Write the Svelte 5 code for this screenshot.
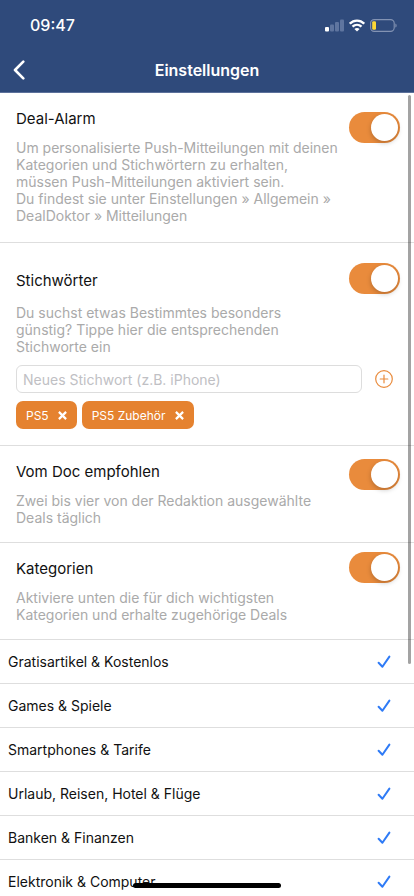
<script>
  let alarm = $state(true);
  let keywordsOn = $state(true);
  let recommended = $state(true);
  let categoriesOn = $state(true);
  let draft = $state('');
  let keywords = $state(['PS5', 'PS5 Zubehör']);
  let categories = $state(
    [
      'Gratisartikel & Kostenlos',
      'Games & Spiele',
      'Smartphones & Tarife',
      'Urlaub, Reisen, Hotel & Flüge',
      'Banken & Finanzen',
      'Elektronik & Computer'
    ].map((name) => ({ name, checked: true }))
  );

  function addKeyword(event) {
    event.preventDefault();
    const word = draft.trim();
    if (word && !keywords.includes(word)) keywords.push(word);
    draft = '';
  }

  function removeKeyword(word) {
    keywords = keywords.filter((k) => k !== word);
  }
</script>

<div class="app">
  <header>
    <div class="status">
      <time>09:47</time>
      <div class="indicators" aria-hidden="true">
        <svg width="19" height="13" viewBox="0 0 19 13">
          <rect x="0" y="8" width="4" height="4.5" rx="1" fill="#fff" />
          <g fill="#5f759f">
            <rect x="5" y="5.5" width="4" height="7" rx="1" />
            <rect x="10" y="3" width="4" height="9.5" rx="1" />
            <rect x="15" y="0.5" width="4" height="12" rx="1" />
          </g>
        </svg>
        <svg width="16" height="13" viewBox="0 0 16 13" fill="none" stroke="#fff" stroke-width="2.3">
          <path d="M0.8 4.7C4.9 0.5 11.1 0.5 15.2 4.7" />
          <path d="M3.5 7.7C6.1 5.2 9.9 5.2 12.5 7.7" />
          <path d="M8 12.4L5.4 9.9C6.9 8.6 9.1 8.6 10.6 9.9Z" fill="#fff" stroke="none" />
        </svg>
        <svg width="27" height="13" viewBox="0 0 27 13">
          <rect x="0.6" y="0.6" width="23.6" height="11.8" rx="3.6" fill="none" stroke="#8393b3" stroke-width="1.1" />
          <path d="M25.4 4.4C27 5 27 8 25.4 8.6Z" fill="#8393b3" />
          <rect x="2.2" y="2.2" width="3.8" height="8.6" rx="1.2" fill="#fbd735" />
        </svg>
      </div>
    </div>
    <nav>
      <button class="back" aria-label="Zurück">
        <svg width="12" height="20" viewBox="0 0 12 20" fill="none" stroke="#fff" stroke-width="2.6" stroke-linecap="round" stroke-linejoin="round">
          <path d="M10.3 1.6L2 10L10.3 18.4" />
        </svg>
      </button>
      <h1>Einstellungen</h1>
    </nav>
  </header>

  <main>
    <section class="alarm">
      <div class="text">
        <h2><label for="alarm">Deal-Alarm</label></h2>
        <p>
          Um personalisierte Push-Mitteilungen mit deinen Kategorien und Stichwörtern zu erhalten,<br />
          müssen Push-Mitteilungen aktiviert sein.<br />Du findest sie unter Einstellungen » Allgemein »
          DealDoktor » Mitteilungen
        </p>
      </div>
      <input class="switch" type="checkbox" role="switch" id="alarm" bind:checked={alarm} />
    </section>

    <section class="keywords">
      <div class="text">
        <h2><label for="keywords">Stichwörter</label></h2>
        <p>Du suchst etwas Bestimmtes besonders günstig? Tippe hier die entsprechenden Stichworte ein</p>
      </div>
      <input class="switch" type="checkbox" role="switch" id="keywords" bind:checked={keywordsOn} />
      <form onsubmit={addKeyword}>
        <input type="text" aria-label="Neues Stichwort" placeholder="Neues Stichwort (z.B. iPhone)" bind:value={draft} />
        <button class="add" aria-label="Hinzufügen">
          <svg width="18" height="18" viewBox="0 0 18 18" fill="none" stroke="#e98b3c" stroke-width="1.2" stroke-linecap="round">
            <circle cx="9" cy="9" r="8.3" />
            <path d="M9 5.2V12.8M5.2 9H12.8" />
          </svg>
        </button>
      </form>
      <ul class="tags">
        {#each keywords as word (word)}
          <li>
            <span>{word}</span>
            <button aria-label="{word} entfernen" onclick={() => removeKeyword(word)}>
              <svg width="9" height="9" viewBox="0 0 9 9" stroke="#fff" stroke-width="2.2">
                <path d="M0.9 0.9L8.1 8.1M8.1 0.9L0.9 8.1" />
              </svg>
            </button>
          </li>
        {/each}
      </ul>
    </section>

    <section class="recommended">
      <div class="text">
        <h2><label for="recommended">Vom Doc empfohlen</label></h2>
        <p>Zwei bis vier von der Redaktion ausgewählte Deals täglich</p>
      </div>
      <input class="switch" type="checkbox" role="switch" id="recommended" bind:checked={recommended} />
    </section>

    <section class="categories">
      <div class="text">
        <h2><label for="categories">Kategorien</label></h2>
        <p>Aktiviere unten die für dich wichtigsten Kategorien und erhalte zugehörige Deals</p>
      </div>
      <input class="switch" type="checkbox" role="switch" id="categories" bind:checked={categoriesOn} />
    </section>

    <ul class="list">
      {#each categories as category (category.name)}
        <li>
          <label>
            <span>{category.name}</span>
            <input type="checkbox" bind:checked={category.checked} />
            <svg width="14" height="14" viewBox="0 0 14 14" fill="none" stroke="#2f7bf6" stroke-width="2" stroke-linecap="round" stroke-linejoin="round">
              <path d="M1.6 7.8L5.4 11.8L12.4 1.6" />
            </svg>
          </label>
        </li>
      {/each}
    </ul>
  </main>

  <div class="scrollbar"></div>
  <div class="home"></div>
</div>

<style>
  :global(body) {
    background: #fff;
  }
  .app {
    position: relative;
    display: flex;
    flex-direction: column;
    height: 100vh;
    overflow: hidden;
    color: #111;
    font-family: Inter, 'Liberation Sans', sans-serif;
    font-size: 14px;
  }
  .app * {
    box-sizing: border-box;
  }
  h1,
  h2,
  p,
  ul {
    margin: 0;
    padding: 0;
    font-weight: 400;
    list-style: none;
  }
  button {
    display: flex;
    align-items: center;
    justify-content: center;
    padding: 0;
    border: 0;
    background: none;
    cursor: pointer;
  }
  input {
    margin: 0;
    font: inherit;
  }

  header {
    flex: none;
    background: #2f4a7b;
    border-bottom: 1px solid #5c719b;
    color: #fff;
  }
  .status {
    display: flex;
    align-items: center;
    justify-content: space-between;
    height: 48px;
    padding: 2px 17px 0 30px;
  }
  time {
    font-size: 16px;
    font-weight: 500;
  }
  .indicators {
    display: flex;
    gap: 5px;
  }
  nav {
    display: grid;
    grid-template-columns: 38px 1fr 38px;
    align-items: center;
    height: 44px;
  }
  .back {
    height: 44px;
  }
  h1 {
    font-size: 16px;
    font-weight: 600;
    text-align: center;
  }

  main {
    flex: 1;
    min-height: 0;
    overflow: auto;
    scrollbar-width: none;
  }
  section {
    display: grid;
    grid-template-columns: 1fr auto;
    column-gap: 4px;
    align-items: start;
    padding: 16px 14px 16px 16px;
    border-bottom: 1px solid #dedede;
  }
  h2 {
    margin-bottom: 10px;
    font-size: 15px;
    line-height: 20px;
  }
  p {
    color: #aaa;
    line-height: 17px;
  }
  .switch {
    appearance: none;
    display: flex;
    width: 51px;
    height: 31px;
    padding: 2px;
    border-radius: 16px;
    background: #ccc;
    cursor: pointer;
  }
  .switch::before {
    content: '';
    width: 27px;
    height: 27px;
    border-radius: 50%;
    background: #fff;
    box-shadow: 0 2px 5px rgb(0 0 0 / 22%);
  }
  .switch:checked {
    justify-content: flex-end;
    background: #e98b3c;
  }
  .alarm {
    padding-bottom: 18px;
  }
  .alarm .switch {
    margin-top: 3px;
  }
  .keywords {
    padding-top: 20px;
  }
  .keywords .text {
    padding: 8px 16px 0 0;
  }
  .keywords h2 {
    margin-bottom: 13px;
  }
  .recommended .switch {
    margin-top: -3px;
  }
  .categories .switch {
    margin-top: -7px;
  }

  form {
    grid-column: 1 / -1;
    display: flex;
    gap: 12px;
    margin-top: 10px;
  }
  form input {
    flex: 1;
    min-width: 0;
    height: 28px;
    padding: 0 6px;
    border: 1px solid #ddd;
    border-radius: 6px;
    background: #fff;
  }
  form input::placeholder {
    color: #c0c0c4;
    opacity: 1;
  }
  .add {
    width: 20px;
    margin-right: 6px;
  }
  .tags {
    grid-column: 1 / -1;
    display: flex;
    flex-wrap: wrap;
    gap: 5px;
    margin-top: 8px;
  }
  .tags li {
    display: flex;
    align-items: center;
    gap: 9px;
    height: 28px;
    padding: 0 10px;
    border-radius: 7px;
    background: #e5822f;
    color: #fff;
    font-size: 12px;
  }

  .list label {
    display: flex;
    align-items: center;
    justify-content: space-between;
    height: 44px;
    padding: 0 23px 0 8px;
    border-bottom: 1px solid #dedede;
    cursor: pointer;
  }
  .list input {
    position: absolute;
    width: 1px;
    height: 1px;
    opacity: 0;
  }
  .list svg {
    visibility: hidden;
  }
  .list input:checked + svg {
    visibility: visible;
  }

  .scrollbar {
    position: absolute;
    top: 95px;
    right: 3px;
    width: 3px;
    height: 569px;
    border-radius: 2px;
    background: rgb(0 0 0 / 36%);
  }
  .home {
    position: absolute;
    bottom: 8px;
    left: 50%;
    width: 148px;
    height: 5px;
    border-radius: 3px;
    background: #000;
    transform: translateX(-50%);
  }
</style>
